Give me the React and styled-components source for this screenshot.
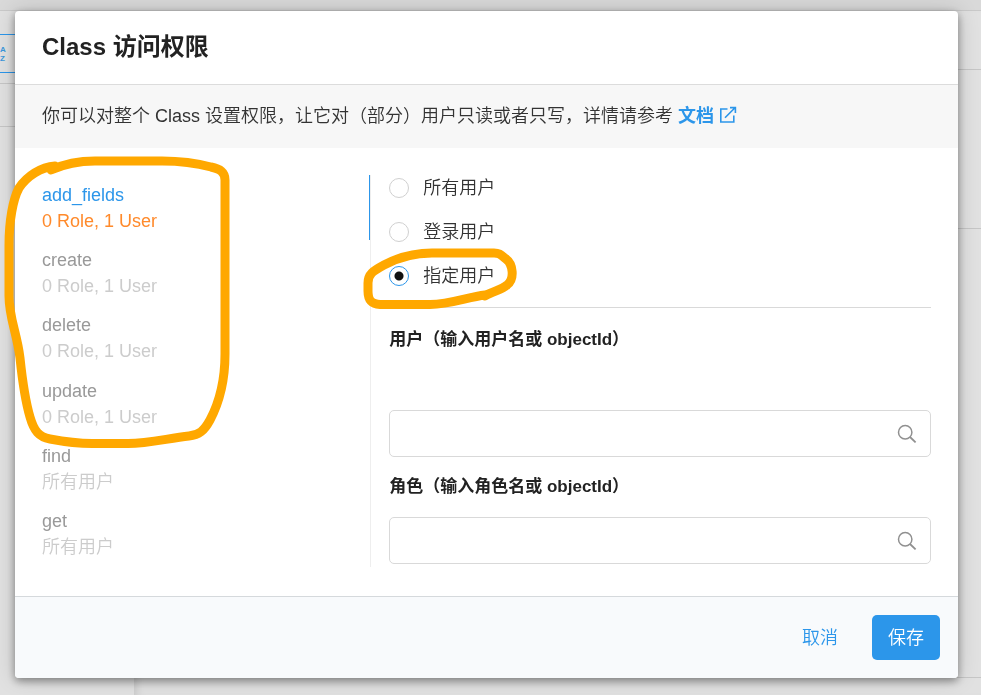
import React, { useState } from 'react';
import styled, { createGlobalStyle } from 'styled-components';

const GlobalStyle = createGlobalStyle`
  * {
    box-sizing: border-box;
  }

  body {
    margin: 0;
    font-family: 'Liberation Sans', 'Noto Sans CJK SC', sans-serif;
    font-size: 18px;
    font-weight: 350;
    line-height: 26px;
    color: #333;
    background-color: #e1e1e1;
  }

  button,
  input {
    font: inherit;
  }
`;

const Page = styled.div`
  display: flex;
  flex-direction: column;
  min-height: 100vh;
`;

const TopBar = styled.div`
  height: 11px;
  background-color: #d9d9d9;
  border-bottom: 1px solid #c9c9c9;
`;

const Columns = styled.div`
  display: flex;
  flex: 1;
`;

const LeftColumn = styled.div`
  display: flex;
  flex-direction: column;
  width: 134px;
  background-color: #e1e1e1;
`;

const RightColumn = styled.div`
  display: flex;
  flex-direction: column;
  flex: 1;
  box-shadow: inset 8px 0 8px -6px rgba(0, 0, 0, 0.12);
`;

const Strip = styled.div`
  height: ${({ $height }) => $height}px;
  padding-top: ${({ $top }) => $top || 0}px;
  border-bottom: 1px solid #c6c6c6;
`;

const SortButton = styled.button`
  display: flex;
  flex-direction: column;
  align-items: flex-start;
  justify-content: center;
  width: 60px;
  height: 39px;
  padding: 0;
  border: solid #2c96ea;
  border-width: 1px 1px 1px 0;
  background: none;
  color: #3b97dc;

  && {
    font-size: 8px;
    font-weight: 700;
    line-height: 9px;
  }
`;

const Overlay = styled.div`
  position: fixed;
  inset: 0;
  display: flex;
  align-items: flex-start;
  padding: 11px 23px 17px 15px;
`;

const Dialog = styled.form`
  flex: 1;
  border-radius: 4px;
  overflow: hidden;
  background-color: #fff;
  box-shadow: 0 3px 8px rgba(0, 0, 0, 0.4), 0 0 22px rgba(0, 0, 0, 0.16);
`;

const Header = styled.header`
  padding: 20px 27px 21px;
  border-bottom: 1px solid #dcdcdc;
`;

const Title = styled.h1`
  margin: 0;
  font-size: 24px;
  font-weight: 700;
  line-height: 32px;
  color: #222;
`;

const Notice = styled.p`
  margin: 0;
  padding: 18px 27px 19px;
  background-color: #f7f7f7;
`;

const DocLink = styled.a`
  color: #2c96ea;
  font-weight: 700;
  text-decoration: none;

  & > svg {
    margin-left: 5px;
    vertical-align: -2px;
  }
`;

const Body = styled.div`
  display: grid;
  grid-template-columns: 7fr 11fr;
  padding: 27px 27px 29px 0;
`;

const Nav = styled.nav`
  display: grid;
  grid-auto-rows: 1fr;
  border-right: 1px solid #eee;
`;

const NavItem = styled.button`
  display: flex;
  flex-direction: column;
  justify-content: center;
  padding: 0 0 0 27px;
  border: 0;
  border-right: 1px solid ${({ $active }) => ($active ? '#2c96ea' : 'transparent')};
  background: none;
  text-align: left;
  color: ${({ $active }) => ($active ? '#2c96ea' : '#999')};
`;

const Summary = styled.span`
  color: ${({ $active }) => ($active ? '#ff8a2b' : '#ccc')};
`;

const Settings = styled.div`
  padding: 0 0 3px 18px;
`;

const RadioGroup = styled.div`
  display: flex;
  flex-direction: column;
  align-items: flex-start;
  gap: 18px;
  padding-bottom: 18px;
  border-bottom: 1px solid #d9d9d9;
`;

const RadioLabel = styled.label`
  display: flex;
  align-items: center;
  gap: 14px;
`;

const Radio = styled.input`
  appearance: none;
  width: 20px;
  height: 20px;
  margin: 0;
  border: 1px solid #d0d0d0;
  border-radius: 50%;
  background-color: #fff;

  &:checked {
    border-color: #2c96ea;
    background-image: radial-gradient(circle, #111 4px, transparent 5px);
  }
`;

const FieldLabel = styled.label`
  display: block;
  margin: ${({ $first }) => ($first ? 19 : 17)}px 0 17px;
  font-size: 17px;
  font-weight: 700;
  color: #222;
`;

const Tags = styled.div`
  min-height: 40px;
`;

const SearchBox = styled.div`
  display: flex;
  align-items: center;
  height: 47px;
  padding-right: 13px;
  border: 1px solid #d9d9d9;
  border-radius: 5px;
`;

const SearchInput = styled.input`
  flex: 1;
  min-width: 0;
  padding: 0 13px;
  border: 0;
  outline: 0;
  background: none;
`;

const Footer = styled.footer`
  display: flex;
  justify-content: flex-end;
  gap: 18px;
  padding: 18px;
  border-top: 1px solid #d5d9dc;
  background-color: #f8fafc;
`;

const Button = styled.button`
  height: 45px;
  padding: 0 16px;
  border: 0;
  border-radius: 5px;
  color: ${({ $primary }) => ($primary ? '#fff' : '#2c96ea')};
  background-color: ${({ $primary }) => ($primary ? '#2c96ea' : 'transparent')};
`;

// hand-drawn marks that lie over the dialog
const Marks = styled.svg`
  position: fixed;
  top: 0;
  left: 0;
  pointer-events: none;
`;

const ExternalIcon = () => (
  <svg width='18' height='18' viewBox='0 0 18 18' fill='none' stroke='currentColor' strokeWidth='1.6'>
    <path d='M8.5 3H1.8v13h13V9.5M6 11.7L16 1.7M11 1.6h5.4V7' />
  </svg>
);

const SearchIcon = () => (
  <svg width='20' height='20' viewBox='0 0 20 20' fill='none' stroke='#909090' strokeWidth='1.5'>
    <circle cx='8.2' cy='8.2' r='6.7' />
    <path d='M13 13l5.6 5.4' strokeWidth='1.8' />
  </svg>
);

const permissions = [
  { name: 'add_fields', summary: '0 Role, 1 User' },
  { name: 'create', summary: '0 Role, 1 User' },
  { name: 'delete', summary: '0 Role, 1 User' },
  { name: 'update', summary: '0 Role, 1 User' },
  { name: 'find', summary: '所有用户' },
  { name: 'get', summary: '所有用户' },
];

const scopes = ['所有用户', '登录用户', '指定用户'];

const Background = () => (
  <Page>
    <TopBar />
    <Columns>
      <LeftColumn>
        <Strip $height={73} $top={23}>
          <SortButton type='button'>
            <span>A</span>
            <span>Z</span>
          </SortButton>
        </Strip>
        <Strip $height={43} />
      </LeftColumn>
      <RightColumn>
        <Strip $height={59} />
        <Strip $height={159} />
        <Strip $height={449} />
      </RightColumn>
    </Columns>
  </Page>
);

const SearchField = ({ id, label, first, children }) => (
  <>
    <FieldLabel htmlFor={id} $first={first}>
      {label}
    </FieldLabel>
    {children}
    <SearchBox>
      <SearchInput id={id} type='text' />
      <SearchIcon />
    </SearchBox>
  </>
);

function App() {
  const [active, setActive] = useState('add_fields');
  const [scope, setScope] = useState('指定用户');

  return (
    <>
      <GlobalStyle />
      <Background />
      <Overlay>
        <Dialog onSubmit={(e) => e.preventDefault()}>
          <Header>
            <Title>Class 访问权限</Title>
          </Header>
          <Notice>
            你可以对整个 Class 设置权限，让它对（部分）用户只读或者只写，详情请参考{' '}
            <DocLink href='#docs'>
              文档
              <ExternalIcon />
            </DocLink>
          </Notice>
          <Body>
            <Nav>
              {permissions.map(({ name, summary }) => (
                <NavItem
                  key={name}
                  type='button'
                  $active={name === active}
                  onClick={() => setActive(name)}
                >
                  <span>{name}</span>
                  <Summary $active={name === active}>{summary}</Summary>
                </NavItem>
              ))}
            </Nav>
            <Settings>
              <RadioGroup>
                {scopes.map((s) => (
                  <RadioLabel key={s}>
                    <Radio
                      type='radio'
                      name='scope'
                      checked={s === scope}
                      onChange={() => setScope(s)}
                    />
                    {s}
                  </RadioLabel>
                ))}
              </RadioGroup>
              <SearchField id='users' label='用户（输入用户名或 objectId）' first>
                <Tags />
              </SearchField>
              <SearchField id='roles' label='角色（输入角色名或 objectId）' />
            </Settings>
          </Body>
          <Footer>
            <Button type='button'>取消</Button>
            <Button type='submit' $primary>
              保存
            </Button>
          </Footer>
        </Dialog>
      </Overlay>
      <Marks
        width='530'
        height='460'
        fill='none'
        stroke='#ffa800'
        strokeWidth='9'
        strokeLinecap='round'
        strokeLinejoin='round'
      >
        <path d='M55 166C41 167 27 176 19 188C13 199 9 221 9 245V296C9 318 17 333 20 358C22 377 25 400 30 417C34 431 39 437 50 439C66 442 76 443.500 92 443.500H128C149 443.500 169 438 189 436C199 435 204 431 210 420C219 403 225 382 225 354V180C225 172 220 169 211 167C196 163 179 161 162 161H95C76 161 62 165 51 170' />
        <path d='M485 296C493 291 502 290 507 285C515 279 513 264 506 259C500 254 499 253 494 253H432C413 253 397 258 384 265C373 271 368 274 368 283V291C368 300 371 304 380 304.500H430C450 304.500 468 297 485 295' />
      </Marks>
    </>
  );
}

export default App;
